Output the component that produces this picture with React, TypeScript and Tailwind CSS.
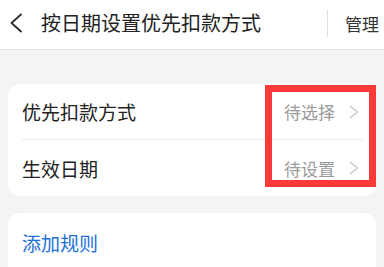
import React from "react";

const Chevron = () => (
  <svg width="10" height="14" viewBox="0 0 10 14" className="ml-[14px] shrink-0">
    <path d="M1 1 L8.5 7 L1 13" fill="none" stroke="#c4c4c4" strokeWidth="1.2" />
  </svg>
);

export default function App() {
  return (
    <div
      className="relative w-[384px] h-[267px] overflow-hidden bg-[#f4f4f4]"
      style={{ fontFamily: '"Noto Sans CJK SC", "Noto Sans", sans-serif' }}
    >
      <div className="h-[50px] bg-white border-b border-[#e2e2e2] flex items-center pb-[3px]">
        <svg width="14" height="20" viewBox="0 0 14 20" className="ml-[9px] shrink-0">
          <path d="M12.5 1 L2.5 10 L12.5 19" fill="none" stroke="#2a2a2a" strokeWidth="1.8" />
        </svg>
        <div className="ml-[18px] text-[20px] leading-none text-[#222]">按日期设置优先扣款方式</div>
        <div className="ml-auto flex items-center">
          <div className="w-px h-[27px] bg-[#dedede]" />
          <div className="ml-[17px] mr-[5px] text-[17px] leading-none text-[#333]">管理</div>
        </div>
      </div>

      <div className="mt-[34px] mx-[8px] rounded-[12px] bg-white">
        <div className="h-[55px] pl-[14px] pr-[17px] flex items-center">
          <div className="text-[19px] leading-none text-[#222]">优先扣款方式</div>
          <div className="ml-auto flex items-center">
            <span className="text-[17px] leading-none text-[#9a9a9a]">待选择</span>
            <Chevron />
          </div>
        </div>
        <div className="ml-[14px] mr-[13px] h-px bg-[#ececec]" />
        <div className="h-[56px] pl-[14px] pr-[17px] flex items-center">
          <div className="text-[19px] leading-none text-[#222]">生效日期</div>
          <div className="ml-auto flex items-center">
            <span className="text-[17px] leading-none text-[#9a9a9a]">待设置</span>
            <Chevron />
          </div>
        </div>
      </div>

      <div className="mt-[17px] mx-[8px] rounded-[12px] bg-white h-[70px]">
        <div className="h-[58px] pl-[14px] flex items-center">
          <div className="text-[19px] leading-none text-[#2070d8]">添加规则</div>
        </div>
      </div>

      <div className="absolute left-[265px] top-[85px] w-[111px] h-[102px] border-[7px] border-[#fd3a3a]" />
    </div>
  );
}
